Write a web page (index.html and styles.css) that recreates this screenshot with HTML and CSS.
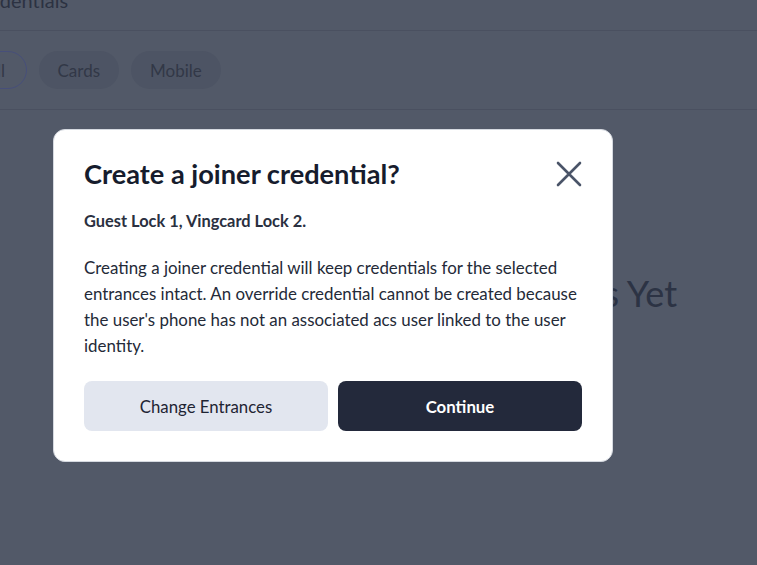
FILE: index.html
```html
<!DOCTYPE html>
<html lang="en">
<head>
<meta charset="utf-8">
<title>Create a joiner credential?</title>
<link rel="stylesheet" href="styles.css">
</head>
<body>
<div class="page">
  <header class="page-header">
    <h1 class="page-title">Credentials</h1>
  </header>
  <nav class="tabs">
    <span class="tab tab-active">All</span>
    <span class="tab">Cards</span>
    <span class="tab">Mobile</span>
  </nav>
  <section class="empty">
    <h2 class="empty-title">No Credentials Yet</h2>
  </section>
</div>

<div class="modal" role="dialog" aria-labelledby="modal-title">
  <div class="modal-head">
    <h2 class="modal-title" id="modal-title">Create a joiner credential?</h2>
    <button class="close" aria-label="Close">
      <svg width="26" height="26" viewBox="0 0 26 26" fill="none" stroke="#4a5468" stroke-width="2.6" stroke-linecap="round">
        <path d="M2 2 L24 24 M24 2 L2 24"/>
      </svg>
    </button>
  </div>
  <p class="modal-sub">Guest Lock 1, Vingcard Lock 2.</p>
  <p class="modal-text">Creating a joiner credential will keep credentials for the selected entrances intact. An override credential cannot be created because the user's phone has not an associated acs user linked to the user identity.</p>
  <div class="modal-actions">
    <button class="btn btn-secondary">Change Entrances</button>
    <button class="btn btn-primary">Continue</button>
  </div>
</div>
</body>
</html>
```

FILE: styles.css
```css
html, body {
  margin: 0;
  padding: 0;
}
body {
  width: 757px;
  height: 565px;
  overflow: hidden;
  background: #525968;
  font-family: "Lato", "Noto Sans", sans-serif;
  position: relative;
}
.page {
  margin-left: -36px;
  width: 820px;
}
.page-header {
  height: 31px;
  display: flex;
  align-items: flex-start;
  border-bottom: 1px solid #4a5060;
  box-sizing: border-box;
  padding-left: 5px;
}
.page-title {
  margin: -12px 0 0;
  font-size: 20px;
  font-weight: 400;
  color: #2c3242;
  line-height: 24px;
}
.tabs {
  display: flex;
  gap: 12px;
  padding: 20px 0 0 0;
  height: 79px;
  box-sizing: border-box;
  border-bottom: 1px solid #4a5060;
}
.tab {
  height: 38px;
  box-sizing: border-box;
  padding: 0 19px;
  display: flex;
  align-items: center;
  border-radius: 19px;
  background: #4d5464;
  color: #323847;
  font-size: 17px;
}
.tab-active {
  background: transparent;
  border: 1px solid #474f7a;
  padding: 0 20.5px;
}
.empty {
  padding-top: 161px;
  padding-left: 420px;
}
.empty-title {
  margin: 0;
  font-size: 36px;
  font-weight: 400;
  color: #2c3344;
  line-height: 44px;
}

.modal {
  position: absolute;
  left: 53px;
  top: 129px;
  width: 560px;
  box-sizing: border-box;
  background: #fff;
  border-radius: 12px;
  border: 1px solid #d5d9e0;
  padding: 26px 30px 30px 30px;
}
.modal-head {
  display: flex;
  align-items: center;
  justify-content: space-between;
}
.modal-title {
  margin: 0;
  font-size: 27.2px;
  font-weight: 700;
  color: #161c2d;
  line-height: 36px;
}
.close {
  border: 0;
  background: none;
  padding: 0;
  width: 26px;
  height: 26px;
  display: flex;
}
.modal-sub {
  margin: 18px 0 0;
  font-size: 16.4px;
  font-weight: 700;
  color: #2a3040;
  line-height: 22px;
}
.modal-text {
  margin: 23px 0 0;
  font-size: 16.9px;
  line-height: 26px;
  color: #242a38;
}
.modal-actions {
  display: flex;
  gap: 10px;
  margin-top: 22px;
}
.btn {
  flex: 1;
  height: 50px;
  border: 0;
  border-radius: 8px;
  font-family: inherit;
  font-size: 16.8px;
}
.btn-secondary {
  background: #e2e6ef;
  color: #1e2433;
  font-weight: 400;
}
.btn-primary {
  background: #23293b;
  color: #fff;
  font-weight: 700;
}
```
